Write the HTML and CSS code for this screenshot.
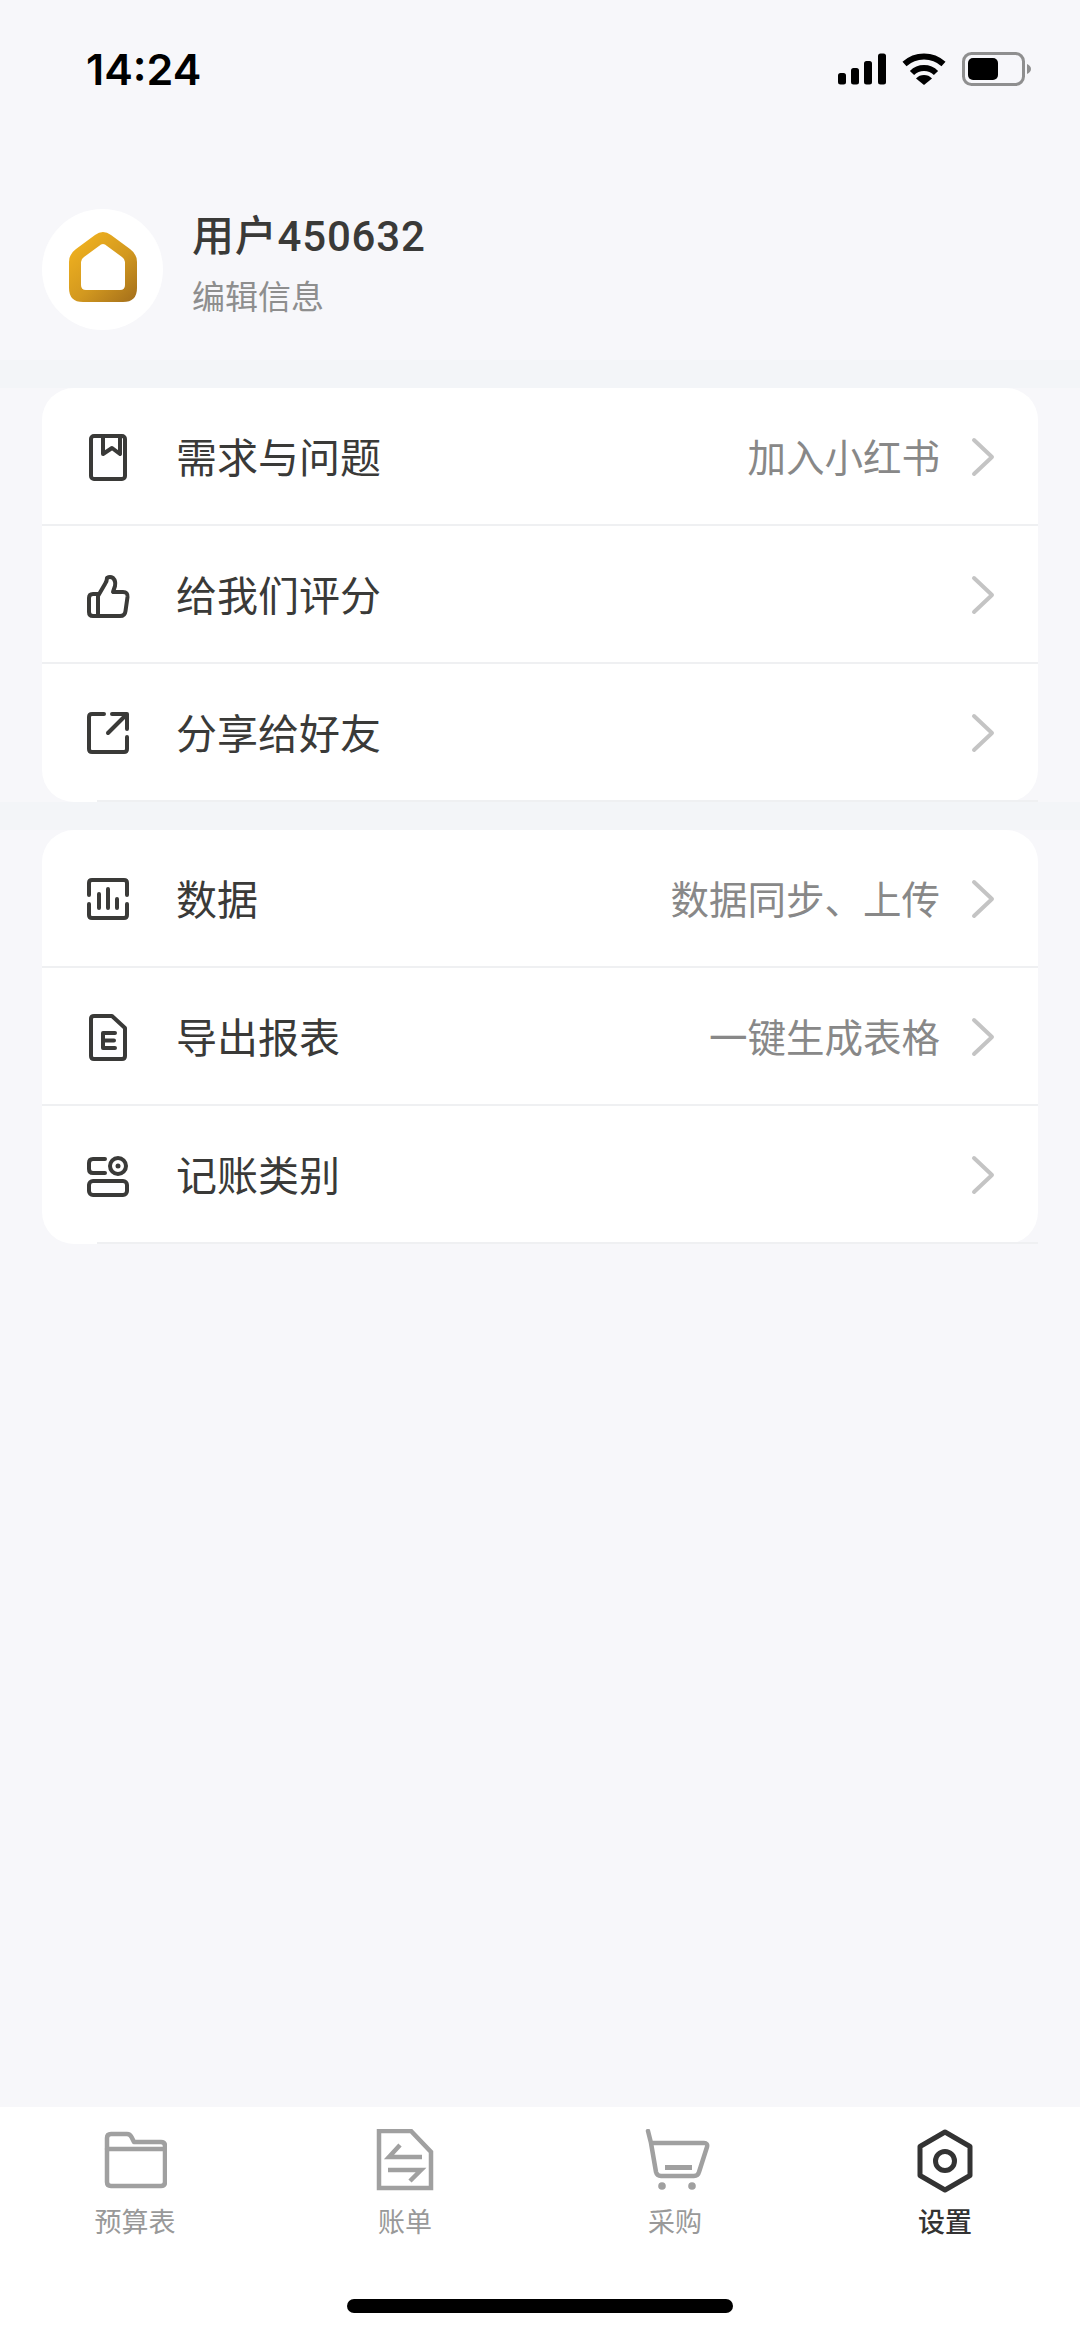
FILE: index.html
```html
<!DOCTYPE html>
<html lang="zh-CN">
<head>
    <meta charset="UTF-8">
    <meta name="viewport" content="width=device-width, initial-scale=1.0">
    <title>设置</title>
    <link rel="stylesheet" href="styles.css">
</head>
<body>
    <div class="status-bar">
        <span class="time">14:24</span>
        <div class="status-icons">
            <svg class="signal" width="48" height="32" viewBox="0 0 48 32">
                <rect x="0" y="20" width="8" height="11.5" rx="2.5"/>
                <rect x="13" y="15" width="8" height="16.5" rx="2.5"/>
                <rect x="26" y="8" width="8" height="23.5" rx="2.5"/>
                <rect x="40" y="0.5" width="8" height="31" rx="2.5"/>
            </svg>
            <svg class="wifi" width="46" height="34" viewBox="0 0 46 34">
                <path d="M3.5 12 A29 29 0 0 1 42.5 12" fill="none" stroke="#000" stroke-width="6"/>
                <path d="M11 21 A17 17 0 0 1 35 21" fill="none" stroke="#000" stroke-width="6"/>
                <path d="M23 33 L15 26.5 A11 11 0 0 1 31 26.5 Z"/>
            </svg>
            <svg class="battery" width="69" height="34" viewBox="0 0 69 34">
                <rect x="1.5" y="1.5" width="60" height="31" rx="8" fill="none" stroke="#8f8f8f" stroke-width="3"/>
                <rect x="6" y="6" width="30" height="22" rx="5"/>
                <path d="M65 12 Q69 14 69 17 Q69 20 65 22 Z" fill="#8f8f8f"/>
            </svg>
        </div>
    </div>

    <header class="profile">
        <div class="avatar">
            <svg width="70" height="72" viewBox="0 0 70 72">
                <defs>
                    <linearGradient id="logoGold" x1="0.1" y1="0.05" x2="0.95" y2="1">
                        <stop offset="0" stop-color="#f2b31f"/>
                        <stop offset="0.55" stop-color="#d2981f"/>
                        <stop offset="1" stop-color="#a5701b"/>
                    </linearGradient>
                </defs>
                <path fill="url(#logoGold)" fill-rule="evenodd" d="M35 1 Q39 1 43 4 L62 18 Q69 23 69 31 V57 Q69 71 55 71 H15 Q1 71 1 57 V31 Q1 23 8 18 L27 4 Q31 1 35 1 Z M35 13 Q33 13 31 15 L16 26 Q13 28 13 31 V54 Q13 59 18 59 H52 Q57 59 57 54 V31 Q57 28 54 26 L39 15 Q37 13 35 13 Z"/>
            </svg>
        </div>
        <div class="profile-text">
            <div class="profile-name">用户450632</div>
            <div class="profile-edit">编辑信息</div>
        </div>
    </header>

    <main class="content">
        <div class="band"></div>
        <section class="card">
            <div class="row">
                <svg class="row-icon" viewBox="0 0 48 48">
                    <rect x="7" y="3" width="34" height="43" rx="3"/>
                    <path d="M19 3 V21 L28 15 L36 21 V3"/>
                </svg>
                <span class="row-label">需求与问题</span>
                <span class="row-note">加入小红书</span>
                <svg class="chevron" viewBox="0 0 24 40"><path d="M3 3 L21 20 L3 37"/></svg>
            </div>
            <div class="row">
                <svg class="row-icon" viewBox="0 0 48 48">
                    <path d="M14 45 V25 L21 13 Q23 10 23 7 Q26 5 29 7 Q32 10 31 15 L29 21 H39 Q44 21 43.5 26 L41.5 40 Q41 45 36 45 H9 Q5 45 5 41 V27 Q5 23 9 23 H14"/>
                </svg>
                <span class="row-label">给我们评分</span>
                <svg class="chevron" viewBox="0 0 24 40"><path d="M3 3 L21 20 L3 37"/></svg>
            </div>
            <div class="row">
                <svg class="row-icon" viewBox="0 0 48 48">
                    <path d="M20 5 H8 Q5 5 5 8 V40 Q5 43 8 43 H40 Q43 43 43 40 V28"/>
                    <path d="M24 24 L42 6"/>
                    <path d="M28 5 H43 V20"/>
                </svg>
                <span class="row-label">分享给好友</span>
                <svg class="chevron" viewBox="0 0 24 40"><path d="M3 3 L21 20 L3 37"/></svg>
            </div>
        </section>

        <div class="band"></div>
        <section class="card">
            <div class="row">
                <svg class="row-icon" viewBox="0 0 48 48">
                    <path d="M5 20 V8 Q5 5 8 5 H40 Q43 5 43 8 V20"/>
                    <path d="M43 29 V40 Q43 43 40 43 H8 Q5 43 5 40 V29"/>
                    <path d="M15 19 V33 M24 14 V33 M33 24 V33"/>
                </svg>
                <span class="row-label">数据</span>
                <span class="row-note">数据同步、上传</span>
                <svg class="chevron" viewBox="0 0 24 40"><path d="M3 3 L21 20 L3 37"/></svg>
            </div>
            <div class="row">
                <svg class="row-icon" viewBox="0 0 48 48">
                    <path d="M10 3 H28 L41 15 V43 Q41 46 38 46 H10 Q7 46 7 43 V6 Q7 3 10 3 Z"/>
                    <path d="M31 20 H19 V35 H31 M19 27.5 H30"/>
                </svg>
                <span class="row-label">导出报表</span>
                <span class="row-note">一键生成表格</span>
                <svg class="chevron" viewBox="0 0 24 40"><path d="M3 3 L21 20 L3 37"/></svg>
            </div>
            <div class="row">
                <svg class="row-icon" viewBox="0 0 48 48">
                    <path d="M21 8 H9 Q5 8 5 12 V18 Q5 22 9 22 H21"/>
                    <circle cx="34" cy="15" r="8"/>
                    <circle class="dot" cx="34" cy="15" r="2.5"/>
                    <rect x="5" y="30" width="38" height="14" rx="4"/>
                </svg>
                <span class="row-label">记账类别</span>
                <svg class="chevron" viewBox="0 0 24 40"><path d="M3 3 L21 20 L3 37"/></svg>
            </div>
        </section>
    </main>

    <nav class="tab-bar">
        <div class="tabs">
            <div class="tab">
                <svg class="tab-icon" viewBox="0 0 64 64">
                    <path d="M4 53 V9 Q4 5 8 5 H24 Q27 5 28.5 8 L31 13 H58 Q62 13 62 17 V53 Q62 57 58 57 H8 Q4 57 4 53 Z"/>
                    <path d="M4 20 H62"/>
                </svg>
                <span class="tab-label">预算表</span>
            </div>
            <div class="tab">
                <svg class="tab-icon" viewBox="0 0 64 64">
                    <path class="sharp" d="M6 2 H38 L58 23 V59 H6 Z"/>
                    <path class="sharp" d="M27 16 L16 28 H49"/>
                    <path class="sharp" d="M15 41 H48 L37 52"/>
                </svg>
                <span class="tab-label">账单</span>
            </div>
            <div class="tab">
                <svg class="tab-icon" viewBox="-3 0 70 64">
                    <path d="M5 2 L8 14 H61 Q65 14 64 18 L56 43 Q55 47 51 47 H18 Q14 47 13 43 L8 14"/>
                    <path d="M22 38.5 H49" class="cart-dash"/>
                    <circle class="dot" cx="19" cy="57" r="3.8"/>
                    <circle class="dot" cx="49" cy="57" r="3.8"/>
                </svg>
                <span class="tab-label">采购</span>
            </div>
            <div class="tab active">
                <svg class="tab-icon" viewBox="0 0 64 64">
                    <path d="M32 3 L57 17.5 V46.5 L32 61 L7 46.5 V17.5 Z"/>
                    <circle cx="32" cy="32" r="9.5"/>
                </svg>
                <span class="tab-label">设置</span>
            </div>
        </div>
        <div class="home-bar"></div>
    </nav>
</body>
</html>
```

FILE: styles.css
```css
* {
    box-sizing: border-box;
}
body {
    margin: 0;
    height: 2337px;
    display: flex;
    flex-direction: column;
    background-color: #f7f7fa;
    color: #3a3a38;
    font-family: "Noto Sans CJK SC", "Noto Sans", sans-serif;
}

/* status bar */
.status-bar {
    height: 138px;
    display: flex;
    align-items: center;
    justify-content: space-between;
    padding: 0 56px 0 86px;
    flex-shrink: 0;
}
.time {
    font-family: Inter, sans-serif;
    font-size: 43px;
    font-weight: 600;
    color: #000;
}
.status-icons {
    display: flex;
    align-items: center;
    gap: 15px;
}
.battery {
    margin-right: -7px;
}

/* profile header */
.profile {
    height: 222px;
    display: flex;
    align-items: center;
    padding: 40px 0 0 42px;
    gap: 29px;
    flex-shrink: 0;
}
.avatar {
    width: 121px;
    height: 121px;
    padding-bottom: 5px;
    border-radius: 50%;
    background-color: #fff;
    display: flex;
    align-items: center;
    justify-content: center;
}
.profile-text {
    padding-bottom: 12px;
}
.profile-name {
    font-family: Roboto, "Noto Sans CJK SC", sans-serif;
    font-size: 42px;
    line-height: 56px;
    font-weight: 500;
    letter-spacing: 0.8px;
    color: #3a3a38;
}
.profile-edit {
    margin-top: 8px;
    font-size: 33px;
    line-height: 44px;
    color: #8e8e8e;
}

/* settings cards */
.content {
    flex: 1;
}
.band {
    height: 28px;
    background-color: #f3f5f8;
}
.card {
    position: relative;
    margin: 0 42px;
    background-color: #fff;
    border-radius: 32px;
}
.card::after {
    content: "";
    position: absolute;
    left: 55px;
    right: 0;
    bottom: 0;
    height: 2px;
    background-color: #eff0f2;
}
.row {
    height: 138px;
    display: flex;
    align-items: center;
    padding: 2px 44px 0 42px;
    border-bottom: 2px solid #eff0f2;
}
.row:last-child {
    border-bottom-color: transparent;
}
.row-icon {
    width: 48px;
    height: 48px;
    margin-right: 44px;
    fill: none;
    stroke: #3a3a38;
    stroke-width: 4;
    stroke-linecap: round;
    stroke-linejoin: round;
}
.row-icon .dot {
    fill: #3a3a38;
    stroke: none;
}
.row-label {
    font-size: 41px;
    line-height: 56px;
    padding-bottom: 4px;
    color: #3a3a38;
}
.row-note {
    margin-left: auto;
    font-size: 38.5px;
    line-height: 56px;
    padding-bottom: 4px;
    color: #888;
}
.chevron {
    width: 24px;
    height: 40px;
    margin-left: auto;
    margin-right: -1px;
    fill: none;
    stroke: #c4c4c4;
    stroke-width: 4;
    stroke-linecap: round;
    stroke-linejoin: round;
}
.row-note + .chevron {
    margin-left: 31px;
}

/* bottom tabs */
.tab-bar {
    height: 230px;
    flex-shrink: 0;
    background-color: #fff;
    padding-top: 22px;
}
.tabs {
    display: grid;
    grid-template-columns: repeat(4, 1fr);
}
.tab {
    display: flex;
    flex-direction: column;
    align-items: center;
    gap: 10px;
}
.tab-icon {
    height: 64px;
    fill: none;
    stroke: #a0a0a0;
    stroke-width: 4.5;
    stroke-linecap: round;
    stroke-linejoin: round;
}
.tab-icon .dot {
    fill: #a0a0a0;
    stroke: none;
}
.tab-icon .sharp {
    stroke-linecap: butt;
    stroke-linejoin: miter;
}
.tab-icon .cart-dash {
    stroke-width: 5;
    stroke-linecap: butt;
}
.tab-label {
    font-size: 27px;
    line-height: 36px;
    color: #999;
}
.tab.active .tab-icon {
    stroke: #333;
    stroke-width: 5;
}
.tab.active .tab-label {
    color: #333;
    font-weight: 500;
}
.home-bar {
    width: 386px;
    height: 14px;
    margin: 60px auto 0;
    border-radius: 7px;
    background-color: #000;
}
```
